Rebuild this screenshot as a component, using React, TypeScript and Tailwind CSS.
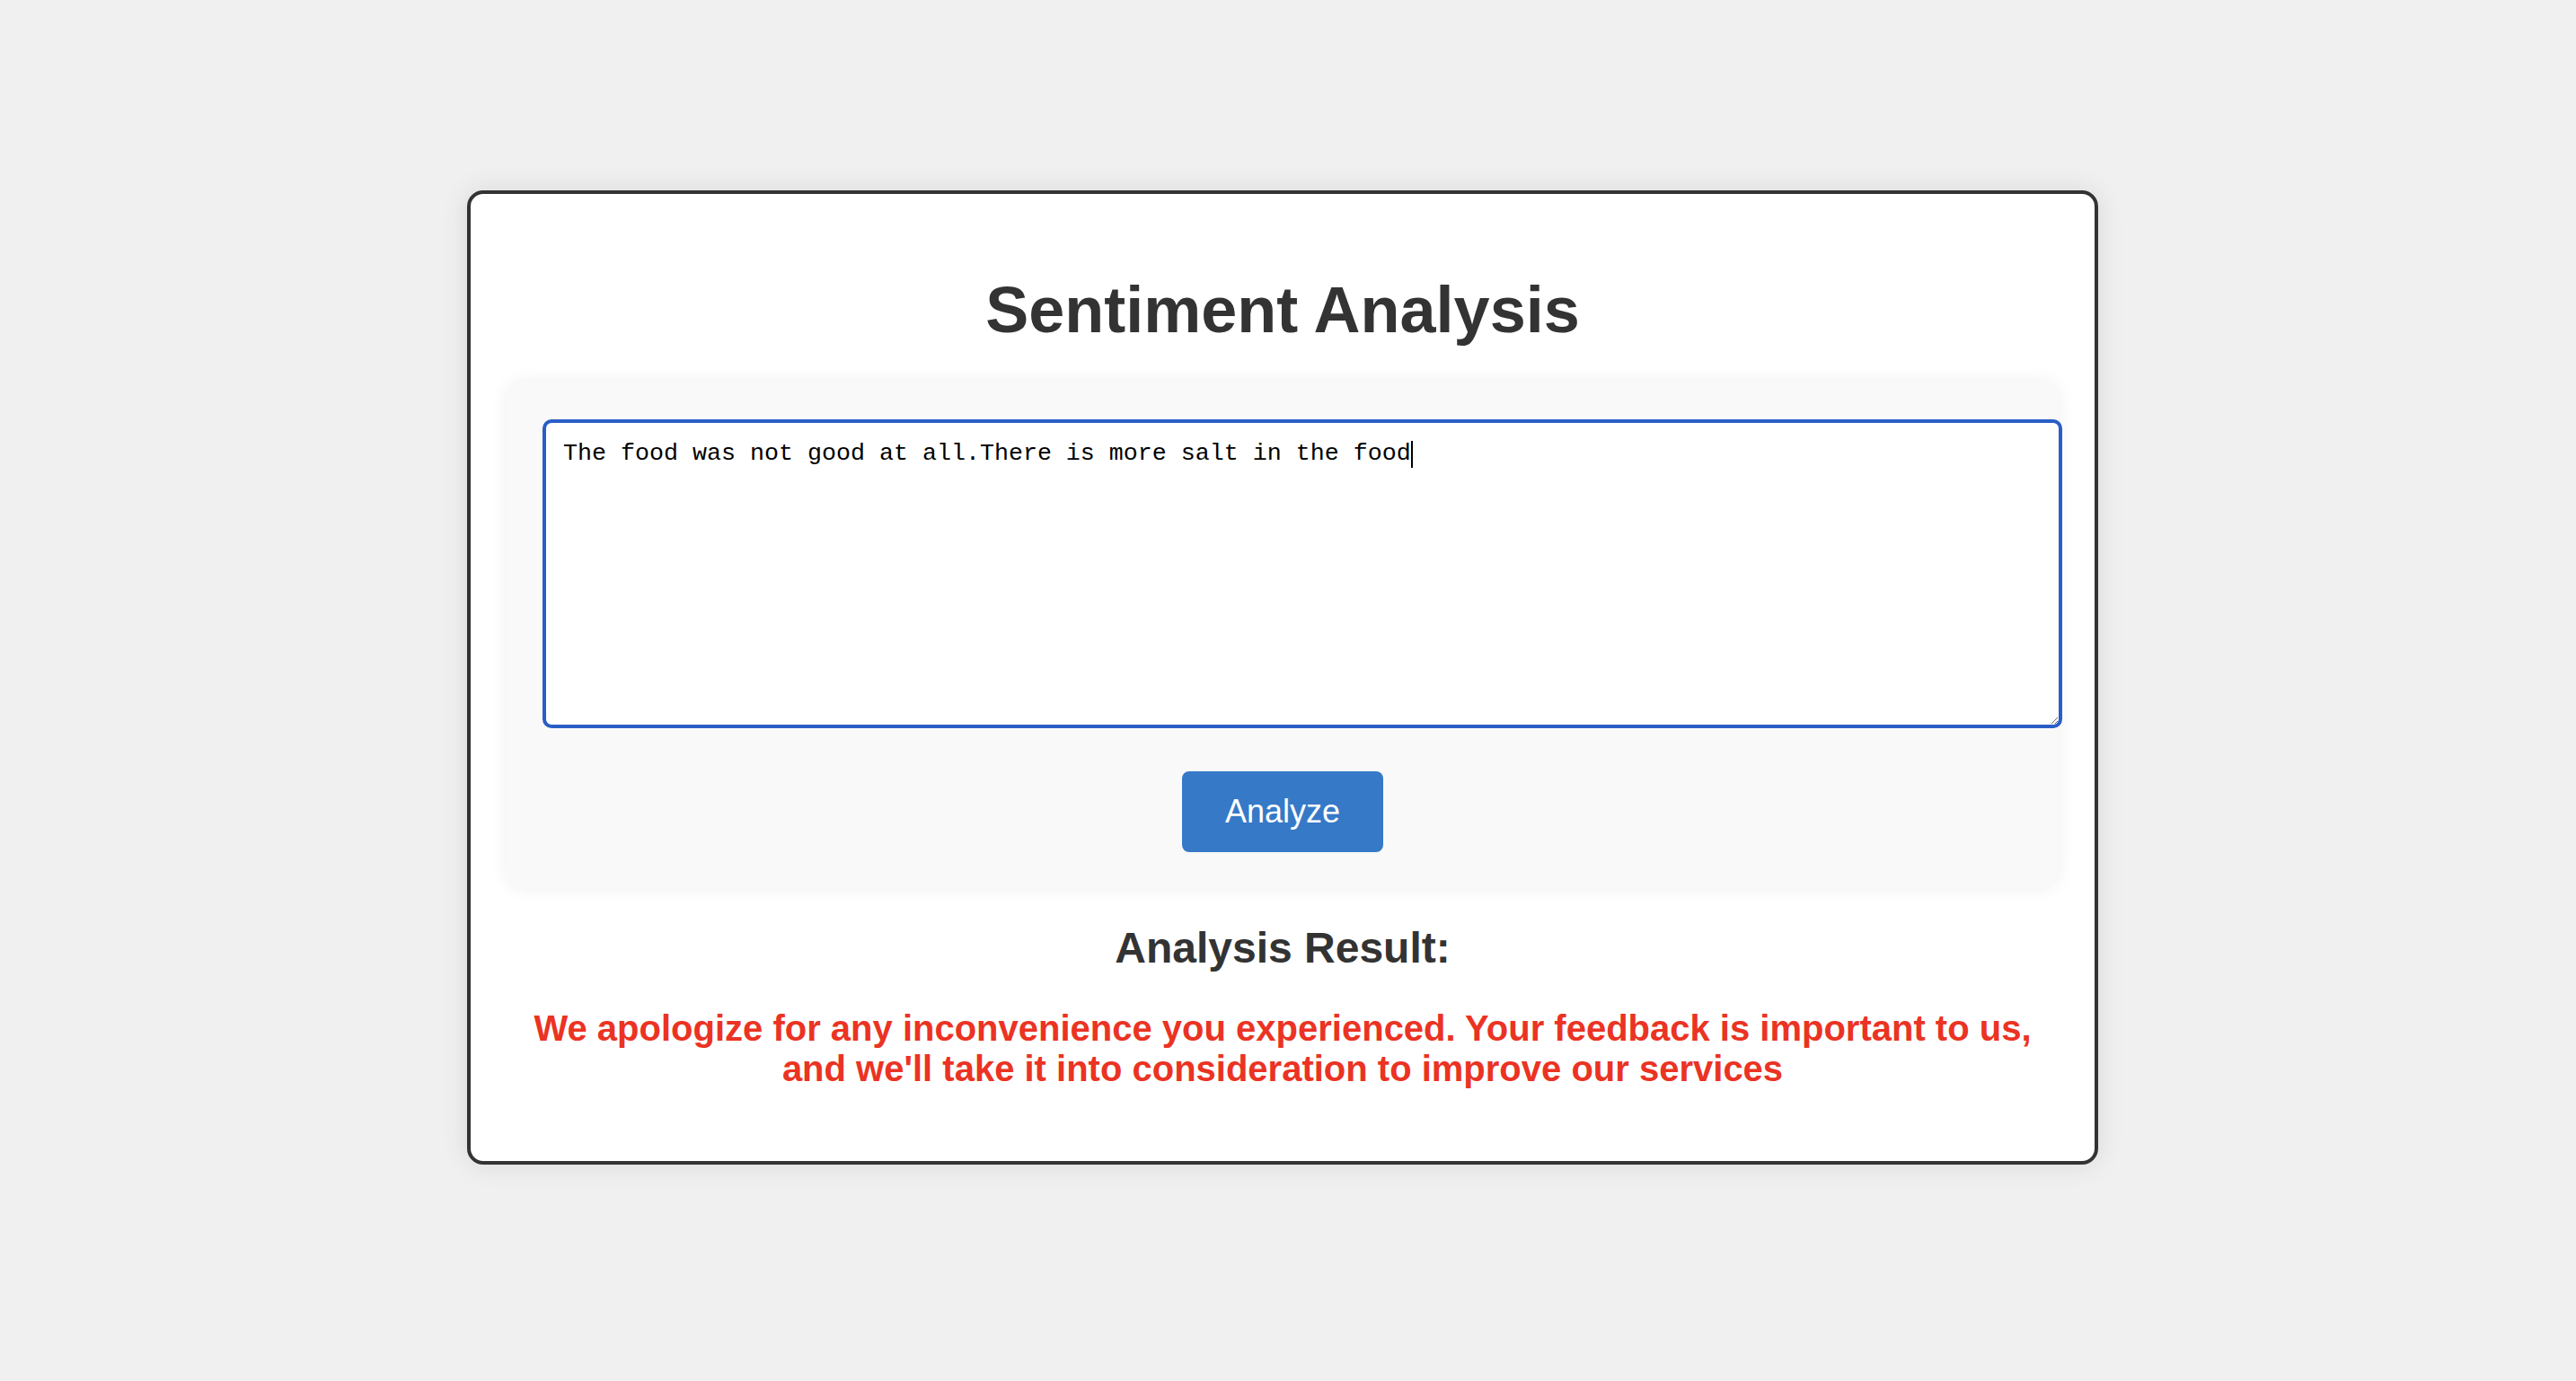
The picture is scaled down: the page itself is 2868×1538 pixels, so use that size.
const SAMPLE_TEXT = 'The food was not good at all.There is more salt in the food'

const RESULT_TEXT =
  "We apologize for any inconvenience you experienced. Your feedback is important to us, and we'll take it into consideration to improve our services"

export default function App() {
  return (
    <div className="min-h-screen bg-[#f0f0f0] pt-[212px] pl-[520px] font-['Liberation_Sans',Arial,sans-serif]">
      <div className="w-[1816px] rounded-[18px] border-4 border-[#333333] bg-white px-[40px] pt-[89px] pb-[80px] shadow-[0_0_30px_rgba(0,0,0,0.1)]">
        <h1 className="text-center text-[72px] font-bold leading-[80px] text-[#333333]">Sentiment Analysis</h1>

        {/* Input panel */}
        <div className="mt-[40px] flex flex-col items-start rounded-[20px] bg-[#f9f9f9] px-[40px] pt-[42px] pb-[40px] shadow-[0_0_20px_rgba(0,0,0,0.07)]">
          <div className="relative shrink-0">
            <textarea
              defaultValue={SAMPLE_TEXT}
              spellCheck={false}
              className="block h-[344px] w-[1692px] rounded-[10px] border-4 border-[#2a5ec6] bg-white p-[19px] font-['Liberation_Mono','Courier_New',monospace] text-[26.67px] leading-[30px] text-black outline-none"
            />
            {/* text caret after the typed sentence */}
            <span className="pointer-events-none absolute left-[967px] top-[24px] h-[30px] w-[2px] bg-black" />
          </div>
          <button className="mt-[48px] self-center rounded-[8px] bg-[#3679c7] px-[48px] py-[24px] text-[36px] leading-[42px] text-white">
            Analyze
          </button>
        </div>

        <h2 className="mt-[40px] text-center text-[48px] font-bold leading-[54px] text-[#333333]">Analysis Result:</h2>
        <p className="mt-[40px] text-center text-[40px] font-bold leading-[45px] text-[#eb3323]">{RESULT_TEXT}</p>
      </div>
    </div>
  )
}
